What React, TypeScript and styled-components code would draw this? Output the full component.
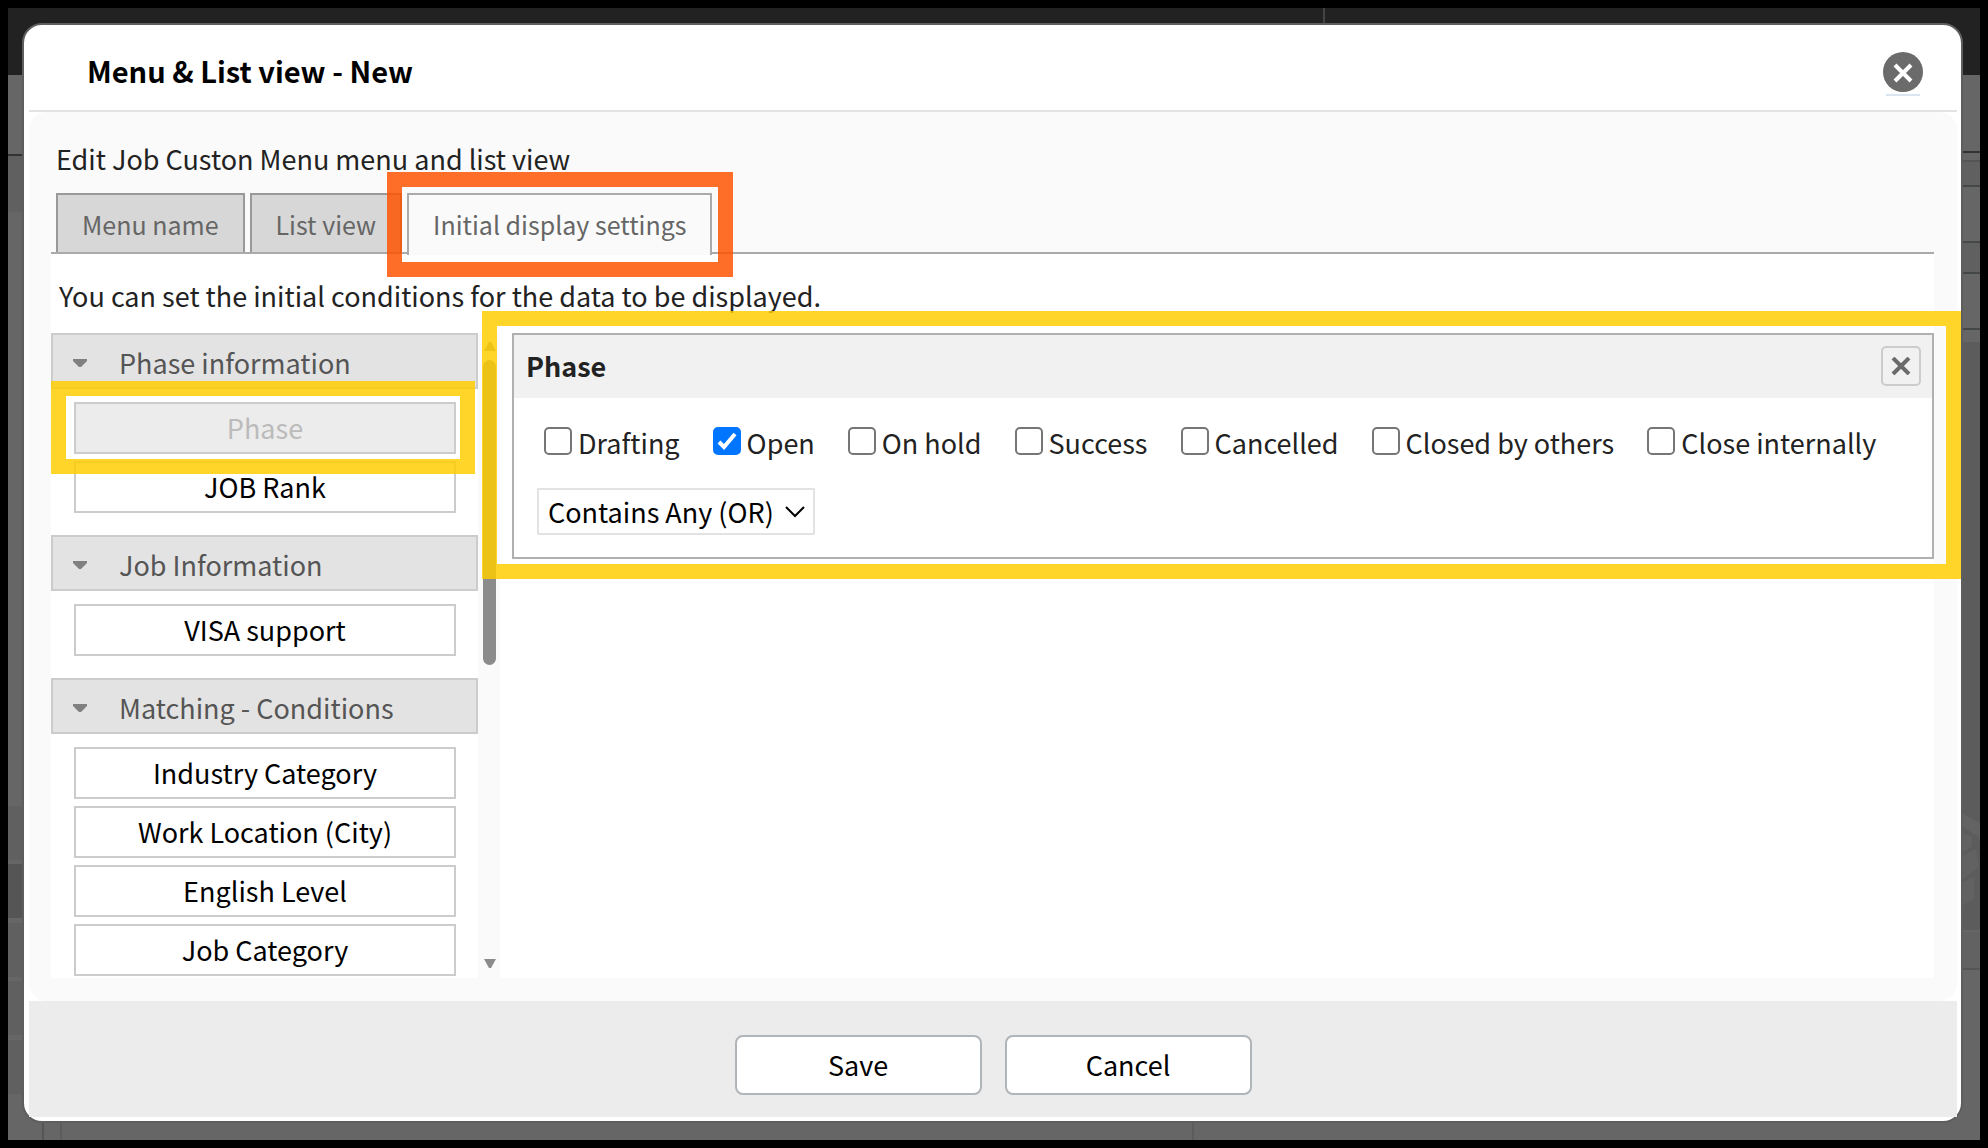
import React, { useState } from 'react';
import styled, { createGlobalStyle, css } from 'styled-components';

const GlobalStyle = createGlobalStyle`
  *, *::before, *::after { box-sizing: border-box; }
  html, body { margin: 0; background: #000; }
  body, button, select, input {
    font-family: "Noto Sans CJK JP", "Noto Sans", sans-serif;
    font-size: 27px;
    line-height: 40px;
  }
  body { color: #222; }
`;

const Screen = styled.div`
  position: relative;
  display: flex;
  min-height: 100vh;
  border: 8px solid #000;
  background: linear-gradient(#222 67px, #666 67px);
`;

const BackdropBand = styled.div<{ $top: number; $height: number; $tone: string; $side: 'left' | 'right' }>`
  position: absolute;
  top: ${(p) => p.$top}px;
  ${(p) => p.$side}: 0;
  width: 18px;
  height: ${(p) => p.$height}px;
  background: ${(p) => p.$tone};
`;

const BackdropRule = styled.div<{ $left: number; $edge: 'top' | 'bottom'; $tone: string }>`
  position: absolute;
  ${(p) => p.$edge}: 0;
  left: ${(p) => p.$left}px;
  width: 2px;
  height: 18px;
  background: ${(p) => p.$tone};
`;

const Watermark = styled.svg`
  position: absolute;
  top: 798px;
  right: 0;
`;

const Dialog = styled.section`
  position: relative;
  flex: 1;
  display: flex;
  flex-direction: column;
  margin: 15px 17px 17px 14px;
  padding: 0 4px 4px 5px;
  border: 2px solid #5e5e5e;
  border-radius: 20px;
  background: #fff;
`;

const Header = styled.header`
  display: flex;
  align-items: center;
  justify-content: space-between;
  height: 87px;
  padding: 5px 34px 0 58px;
  border-bottom: 2px solid #e3e3e3;
`;

const Title = styled.h1`
  margin: 0;
  color: #000;
  font-size: 29px;
  line-height: 44px;
`;

const RoundClose = styled.button`
  display: flex;
  padding: 7px 0 0;
  border: 0;
  background: none;
`;

const Body = styled.div`
  flex: 1;
  display: flex;
  flex-direction: column;
  padding: 27px 23px 23px 22px;
  border-radius: 18px;
  background: #fafafa;
`;

const Lead = styled.p`
  margin: 0;
  padding: 0 5px;
`;

const Tabs = styled.div`
  display: flex;
  gap: 5px;
  margin-top: 14px;
  padding: 0 5px;
  border-bottom: 2px solid #aaa;
`;

const Tab = styled.button<{ $active?: boolean }>`
  height: 59px;
  padding: 0 24px;
  border: 2px solid #999;
  border-bottom: 0;
  background: #d7d7d7;
  color: #666;
  font-size: 25px;
  ${(p) =>
    p.$active &&
    css`
      height: 62px;
      margin-bottom: -3px;
      padding-bottom: 3px;
      background: #fafafa;
      border-color: #aaa;
    `}
`;

const TabMark = styled.div`
  position: relative;
  display: flex;
`;

const Panel = styled.div`
  flex: 1;
  display: flex;
  flex-direction: column;
  background: #fff;
`;

const Note = styled.p`
  margin: 0;
  padding: 22px 8px 17px;
`;

const Columns = styled.div`
  flex: 1;
  display: grid;
  grid-template-columns: 427px 22px minmax(0, 1fr);
`;

const FieldList = styled.div`
  display: flex;
  flex-direction: column;
  gap: 22px;
`;

const Group = styled.div`
  display: flex;
  flex-direction: column;
  gap: 7px;
`;

const GroupHead = styled.button`
  display: flex;
  align-items: center;
  gap: 32px;
  height: 56px;
  margin-bottom: 6px;
  padding: 3px 20px 0;
  border: 2px solid #ccc;
  background: #e3e3e3;
  color: #555;
  text-align: left;
`;

const FieldSlot = styled.div`
  position: relative;
  display: flex;
  padding: 0 22px 0 23px;
`;

const Field = styled.button`
  flex: 1;
  height: 52px;
  padding: 0;
  border: 2px solid #ccc;
  background: #fff;
  color: #000;
  &:disabled {
    background: #ececec;
    color: #bbb;
  }
`;

const Scrollbar = styled.div`
  display: flex;
  flex-direction: column;
  align-items: center;
  gap: 9px;
  padding: 9px 4px 10px 5px;
  background: #fafafa;
`;

const Thumb = styled.div`
  width: 13px;
  height: 305px;
  margin-bottom: auto;
  border-radius: 7px;
  background: #8b8b8b;
`;

const Conditions = styled.div`
  padding-left: 12px;
`;

const Card = styled.fieldset`
  position: relative;
  display: block;
  min-width: 0;
  margin: 0;
  padding: 0;
  border: 2px solid #b0b0b0;
  background: #fff;
`;

const CardHead = styled.div`
  display: flex;
  align-items: center;
  justify-content: space-between;
  height: 63px;
  padding: 0 11px 2px 12px;
  background: #f1f1f1;
`;

const CardTitle = styled.h2`
  margin: 0;
  font-size: 27px;
  line-height: 40px;
`;

const CardClose = styled.button`
  display: flex;
  align-items: center;
  justify-content: center;
  width: 40px;
  height: 40px;
  padding: 0;
  border: 2px solid #ccc;
  border-radius: 5px;
  background: transparent;
`;

const CardBody = styled.div`
  display: flex;
  flex-direction: column;
  align-items: flex-start;
  gap: 25px;
  padding: 25px 22px 22px 23px;
`;

const Options = styled.div`
  display: flex;
  flex-wrap: wrap;
  gap: 0 33px;
  padding-left: 7px;
`;

const Option = styled.label`
  display: flex;
  align-items: center;
  gap: 6px;
  white-space: nowrap;
`;

const Tick = styled.input`
  appearance: none;
  width: 28px;
  height: 28px;
  margin: 0 0 5px;
  border: 2px solid #767676;
  border-radius: 5px;
  background: #fff;
  &:checked {
    border-color: #0075ff;
    background: #0075ff
      url("data:image/svg+xml,%3Csvg xmlns='http://www.w3.org/2000/svg' viewBox='0 0 24 24'%3E%3Cpath d='M4 13l5 5L20 5' fill='none' stroke='white' stroke-width='4'/%3E%3C/svg%3E")
      center / 24px no-repeat;
  }
`;

const SelectBox = styled.div`
  display: grid;
  align-items: center;
  grid-template-columns: 1fr 20px;
  padding-right: 8px;
  border: 2px solid #e3e3e3;
  svg {
    grid-area: 1 / 2;
    pointer-events: none;
  }
`;

const Select = styled.select`
  grid-area: 1 / 1 / 2 / 3;
  appearance: none;
  height: 43px;
  padding: 0 31px 0 9px;
  border: 0;
  background: transparent;
  color: #000;
`;

const Footer = styled.footer`
  display: flex;
  justify-content: center;
  gap: 23px;
  padding: 34px 0 22px;
  background: #ececec;
`;

const FooterButton = styled.button`
  width: 247px;
  height: 60px;
  padding: 0;
  border: 2px solid #b0b5b9;
  border-radius: 8px;
  background: #fff;
  color: #000;
`;

/* Marker frame laid over the part that it points out. */
const Highlight = styled.span<{ $tone: string; $inset: string }>`
  position: absolute;
  z-index: 2;
  inset: ${(p) => p.$inset};
  border: 15px solid ${(p) => p.$tone};
  pointer-events: none;
`;

const YELLOW = 'rgba(255, 205, 0, 0.84)';
const ORANGE = 'rgba(255, 82, 0, 0.84)';

const groups = [
  { name: 'Phase information', fields: ['Phase', 'JOB Rank'] },
  { name: 'Job Information', fields: ['VISA support'] },
  {
    name: 'Matching - Conditions',
    fields: ['Industry Category', 'Work Location (City)', 'English Level', 'Job Category'],
  },
];

const phases = ['Drafting', 'Open', 'On hold', 'Success', 'Cancelled', 'Closed by others', 'Close internally'];

const Caret = () => (
  <svg width="14" height="8" viewBox="0 0 14 8" aria-hidden="true">
    <path d="M0 0h14v2L8 8H6L0 2z" fill="#808080" />
  </svg>
);

const Arrow = ({ up }: { up?: boolean }) => (
  <svg width="12" height="9" viewBox="0 0 12 9" aria-hidden="true">
    <path d={up ? 'M0 9L5 0h2l5 9z' : 'M0 0h12L7 9H5z'} fill="#8b8b8b" />
  </svg>
);

export default function App() {
  const [checked, setChecked] = useState<string[]>(['Open']);
  const toggle = (name: string) =>
    setChecked((now) => (now.includes(name) ? now.filter((n) => n !== name) : [...now, name]));

  return (
    <Screen>
      <GlobalStyle />
      <BackdropBand $side="left" $top={146} $height={2} $tone="#333" />
      <BackdropBand $side="left" $top={148} $height={56} $tone="#606060" />
      <BackdropBand $side="left" $top={798} $height={288} $tone="#606060" />
      <BackdropBand $side="left" $top={852} $height={4} $tone="#666" />
      <BackdropBand $side="left" $top={856} $height={54} $tone="#555" />
      <BackdropBand $side="left" $top={910} $height={5} $tone="#666" />
      <BackdropBand $side="left" $top={969} $height={4} $tone="#666" />
      <BackdropBand $side="left" $top={1027} $height={5} $tone="#666" />
      <BackdropBand $side="right" $top={143} $height={2} $tone="#333" />
      <BackdropBand $side="right" $top={152} $height={2} $tone="#555" />
      <BackdropBand $side="right" $top={154} $height={23} $tone="#606060" />
      <BackdropBand $side="right" $top={177} $height={2} $tone="#444948" />
      <BackdropBand $side="right" $top={233} $height={2} $tone="#444948" />
      <BackdropBand $side="right" $top={235} $height={29} $tone="#606060" />
      <BackdropBand $side="right" $top={264} $height={2} $tone="#444948" />
      <BackdropBand $side="right" $top={320} $height={2} $tone="#444948" />
      <BackdropBand $side="right" $top={334} $height={588} $tone="#5c5c5c" />
      <BackdropBand $side="right" $top={924} $height={36} $tone="#626262" />
      <BackdropBand $side="right" $top={960} $height={2} $tone="#555" />
      <Watermark width="17" height="100" viewBox="0 0 17 100" aria-hidden="true">
        <path d="M0 8l17 9v15L0 21z" fill="#636363" />
        <path d="M0 28l9 2v10l-9 6zM0 50l13-7 3 18-16 12zM0 76l11-5v22l-11 6z" fill="#626262" />
      </Watermark>
      <BackdropRule $edge="top" $left={1315} $tone="#444" />
      <BackdropRule $edge="bottom" $left={34} $tone="#555" />
      <BackdropRule $edge="bottom" $left={52} $tone="#5c5c5c" />
      <BackdropRule $edge="bottom" $left={1184} $tone="#5c5c5c" />
      <Dialog role="dialog" aria-labelledby="dialog-title">
        <Header>
          <Title id="dialog-title">Menu &amp; List view - New</Title>
          <RoundClose type="button" aria-label="Close">
            <svg width="40" height="44" viewBox="0 0 40 44" aria-hidden="true">
              <circle cx="20" cy="20" r="20" fill="#6b6b6b" />
              <path d="M12 13l16 16M28 13L12 29" stroke="#fff" strokeWidth="4" />
              <path d="M3 43h34" stroke="#b5cbe6" strokeWidth="1" />
            </svg>
          </RoundClose>
        </Header>
        <Body>
          <Lead>Edit Job Custon Menu menu and list view</Lead>
          <Tabs role="tablist">
            <Tab type="button" role="tab">Menu name</Tab>
            <Tab type="button" role="tab">List view</Tab>
            <TabMark>
              <Tab type="button" role="tab" aria-selected="true" $active>
                Initial display settings
              </Tab>
              <Highlight $tone={ORANGE} $inset="-21px -21px -25px -20px" />
            </TabMark>
          </Tabs>
          <Panel>
            <Note>You can set the initial conditions for the data to be displayed.</Note>
            <Columns>
              <FieldList>
                {groups.map((group) => (
                  <Group key={group.name}>
                    <GroupHead type="button">
                      <Caret />
                      {group.name}
                    </GroupHead>
                    {group.fields.map((field) => (
                      <FieldSlot key={field}>
                        <Field type="button" disabled={field === 'Phase'}>
                          {field}
                        </Field>
                        {field === 'Phase' && <Highlight $tone={YELLOW} $inset="-21px 3px -20px 0" />}
                      </FieldSlot>
                    ))}
                  </Group>
                ))}
              </FieldList>
              <Scrollbar>
                <Arrow up />
                <Thumb />
                <Arrow />
              </Scrollbar>
              <Conditions>
                <Card aria-label="Phase">
                  <CardHead>
                    <CardTitle>Phase</CardTitle>
                    <CardClose type="button" aria-label="Remove Phase">
                      <svg width="20" height="18" viewBox="0 0 20 18" aria-hidden="true">
                        <path d="M2 1l16 16M18 1L2 17" stroke="#6b6b6b" strokeWidth="4" />
                      </svg>
                    </CardClose>
                  </CardHead>
                  <CardBody>
                    <Options>
                      {phases.map((phase) => (
                        <Option key={phase}>
                          <Tick type="checkbox" checked={checked.includes(phase)} onChange={() => toggle(phase)} />
                          {phase}
                        </Option>
                      ))}
                    </Options>
                    <SelectBox>
                      <Select aria-label="Match rule">
                        <option>Contains Any (OR)</option>
                      </Select>
                      <svg width="20" height="12" viewBox="0 0 20 12" aria-hidden="true">
                        <path d="M1 1l9 9 9-9" fill="none" stroke="#000" strokeWidth="2" />
                      </svg>
                    </SelectBox>
                  </CardBody>
                  <Highlight $tone={YELLOW} $inset="-24px -29px -22px -32px" />
                </Card>
              </Conditions>
            </Columns>
          </Panel>
        </Body>
        <Footer>
          <FooterButton type="button">Save</FooterButton>
          <FooterButton type="button">Cancel</FooterButton>
        </Footer>
      </Dialog>
    </Screen>
  );
}
